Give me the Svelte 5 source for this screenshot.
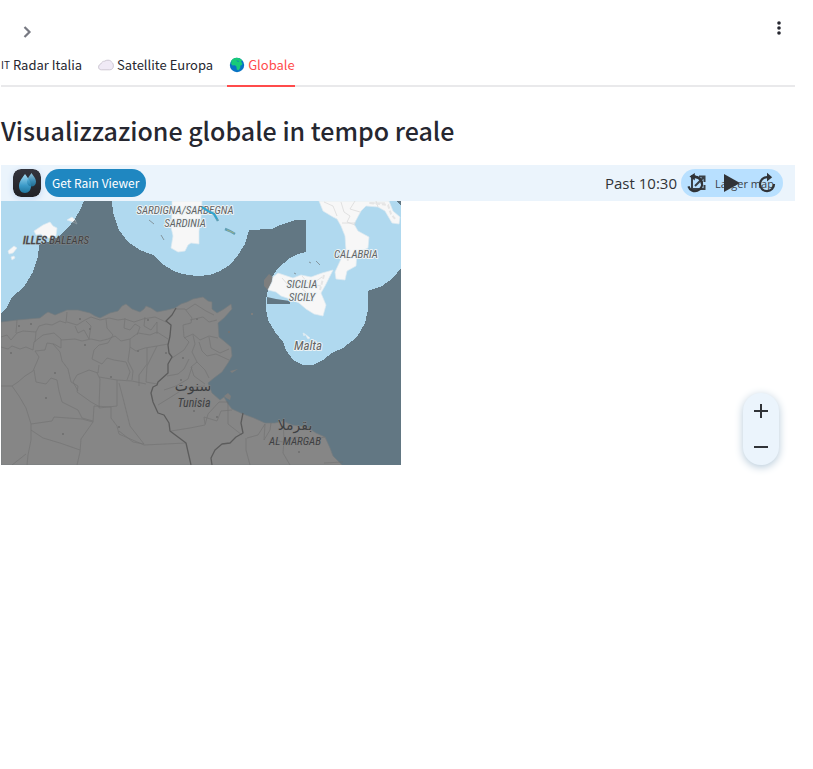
<script>
  const tabs = [
    { id: 'italia', label: 'Radar Italia' },
    { id: 'europa', label: 'Satellite Europa' },
    { id: 'globale', label: 'Globale' }
  ];
  let active = $state('globale');

  const provinces = [
    'M1 337L7 335L11 340L17 333L23 331L36 332L39 326L46 324L52 325L60 321L66 323L67 312',
    'M1 347L8 349L12 346L20 349L26 347L33 350L34 342L43 335L54 333L61 339L61 348L54 344L47 343L45 350L35 351L39 357L33 371L25 376L18 382L12 386L1 386',
    'M17 320L16 333M36 332L35 342M67 322L77 325L85 320L91 317L100 320L109 318L118 320L125 319L134 322L143 319L155 317L166 322',
    'M61 340L75 339L82 341L91 339L100 341L108 339L115 336L121 341L130 339L138 333L150 335L157 332L168 339',
    'M75 326L78 333L84 330L89 339L91 326L86 321M106 319L107 328L113 335L108 343L99 345L94 350L92 359L102 364L107 358L114 360L126 362L130 372L127 380',
    'M130 339L130 347L136 351L145 348L157 346L168 344M130 347L128 361L133 371L132 380M147 348L147 364L139 375L139 386M157 346L151 358L147 366L146 382L157 384',
    'M53 344L60 352L62 361L68 369L71 382L78 386L77 392L91 402L100 407',
    'M34 370L36 382L46 384L51 378L57 380L59 391L62 402L78 410L82 418L93 421',
    'M12 386L19 396L26 408L31 424L31 440L28 455L27 465M31 424L52 421L54 417L82 419L93 422L81 439L80 452L77 465',
    'M31 430L43 438L60 443L80 450M12 465L26 454',
    'M99 365L98 373L89 370L77 375L73 382L78 391M99 377L117 380L117 406L99 408L100 379L97 373M117 380L132 381L146 384',
    'M111 407L111 418L117 426L119 434L144 445L186 443M119 383L123 398L130 426L144 444L133 442L119 431',
    'M93 422L94 406L111 407M125 318L124 328L130 330L135 324L140 327L137 335M145 317L144 326L151 330L157 322L157 334',
    'M176 309L185 309L192 318L191 323L183 325L184 337L189 342L184 350L172 358M186 310L195 304L206 311L214 315',
    'M190 320L203 317L209 322L217 320M184 338L193 334L200 340L209 336L218 338M193 335L195 344L192 352L197 362L191 367L194 376L205 384',
    'M199 342L202 351L207 356L216 354L229 360M209 337L211 348L220 353L229 349M189 359L184 369L178 374L167 376M197 362L205 370L209 378',
    'M192 367L188 379L176 386L164 390M158 405L171 397L185 388L205 386M171 431L190 428L205 425L208 414L219 402L228 402',
    'M205 424L204 417L217 421L221 411L232 410M228 402L228 424L242 435M246 438L246 450L250 465M247 438L258 435L265 424L264 440L270 430L271 423',
    'M283 422L284 440L283 453L290 465M270 439L283 442L296 437L310 440L325 437M324 463L343 462'
  ];
  const towns = [[10,352],[54,372],[45,397],[89,328],[110,376],[137,350],[180,379],[193,410],[62,433],[18,325],[84,344],[165,352],[182,357],[216,416],[298,451],[30,323],[79,318],[118,426],[147,319],[196,318],[228,331]];
</script>

<div class="page">
  <header>
    <button class="icon expand" aria-label="Apri barra laterale">
      <svg width="20" height="20" viewBox="0 0 20 20"><path d="M7.5 5L12.5 10L7.5 15" fill="none" stroke="#777982" stroke-width="2.2" /></svg>
    </button>
    <button class="icon more" aria-label="Menu principale">
      <svg width="20" height="20" viewBox="0 0 20 20" fill="#262730"><circle cx="10" cy="5" r="1.8" /><circle cx="10" cy="10" r="1.8" /><circle cx="10" cy="15" r="1.8" /></svg>
    </button>
  </header>

  <main>
    <div class="tabs" role="tablist">
      {#each tabs as tab}
        <button role="tab" class="tab" class:active={active === tab.id} aria-selected={active === tab.id} onclick={() => (active = tab.id)}>
          {#if tab.id === 'italia'}
            <span class="flag">IT</span>
          {:else if tab.id === 'europa'}
            <svg class="emoji" width="16" height="16" viewBox="0 0 16 16"><path d="M3.5 12.8C1.5 12.8.6 11.6.6 10.2C.6 8.4 1.6 7.2 3 6.8C3.8 5 5 4.2 6.6 4.2C7.6 3.4 8.8 3.2 10 3.2C12 3.2 13.2 4 13.8 5.4C14.9 6.1 15.4 7.3 15.4 8.8C15.4 11.2 14 12.8 11.7 12.8Z" fill="#f0eaf6" stroke="#c9c3cf" stroke-width=".9" /></svg>
          {:else}
            <svg class="emoji" width="16" height="16" viewBox="0 0 16 16"><circle cx="8" cy="8" r="7.2" fill="#0873c4" /><path d="M2 4L4 1.8L7 .8L10.6 1.3L13.5 3.5L12 4.2L13.5 7L12.6 8.3L11.4 8.6L11.2 11L9.5 13.2L7.8 12.5L7.4 9.5L6 8.3L3.5 8.4L2 6.7L2.5 5Z" fill="#18cb78" /><path d="M7 3.6L10.5 4L9 4.7ZM12 10.2L12.8 9.6L12.4 11.7Z" fill="#0873c4" /></svg>
          {/if}
          <span>{tab.label}</span>
        </button>
      {/each}
    </div>

    <h2>Visualizzazione globale in tempo reale</h2>

    <section class="viewer" aria-label="Rain Viewer">
      <div class="bar">
        <svg class="logo" width="28" height="28" viewBox="0 0 28 28">
          <defs>
            <linearGradient id="tile" x1="0" y1="0" x2="0" y2="1"><stop offset="0" stop-color="#34353d" /><stop offset="1" stop-color="#202126" /></linearGradient>
            <linearGradient id="drop" x1="0" y1="0" x2="0" y2="1"><stop offset="0" stop-color="#a6dbf2" /><stop offset=".6" stop-color="#3c9bc9" /><stop offset="1" stop-color="#20769f" /></linearGradient>
          </defs>
          <rect width="28" height="28" rx="8" fill="url(#tile)" />
          <path d="M12 5C13.8 7.5 18 12.3 18 17C18 21 15.7 24 12 24C8.3 24 6 21.2 6 17C6 12.3 9.8 8 12 5Z" fill="url(#drop)" />
          <path d="M18.5 4C20 6.5 23 9.4 23 12.5C23 15.8 21.2 17.5 18.3 17.5C15.5 17.5 14 15.5 14 12.6C14 9.5 16.8 6.5 18.5 4Z" fill="url(#drop)" opacity=".85" />
        </svg>
        <a class="get" href="#rainviewer">Get Rain Viewer</a>
        <span class="time">Past 10:30</span>
        <div class="actions">
          <a class="larger" href="#map">
            <svg width="18" height="18" viewBox="0 0 18 18" fill="none" stroke="#3a4147" stroke-width="2"><path d="M7 2.5H3V15H15.5V11M10 2.5H15.5V8M15.5 2.5L6 12" /></svg>
            <span>Larger map</span>
          </a>
          <div class="playback">
            <button class="icon" aria-label="Indietro"><svg width="22" height="22" viewBox="0 0 22 22"><path d="M10 5.2A7 7 0 1 1 3 12" fill="none" stroke="#303337" stroke-width="2.2" transform="rotate(-20 10 12)" /><path d="M4.5 4.5L9.8 1V8.4Z" fill="#303337" /><path d="M9 4.7C14 4.7 17 8 17 12" fill="none" stroke="#303337" stroke-width="2.2" /></svg></button>
            <button class="icon" aria-label="Riproduci"><svg width="22" height="22" viewBox="0 0 22 22"><path d="M3 2L19 11L3 20Z" fill="#303337" /></svg></button>
            <button class="icon" aria-label="Avanti"><svg width="22" height="22" viewBox="0 0 22 22"><path d="M10 5.2A7 7 0 1 0 17 12" fill="none" stroke="#303337" stroke-width="2.2" /><path d="M10 .8V9.6L15.2 5.2Z" fill="#303337" /></svg></button>
          </div>
        </div>
      </div>

      <div class="map">
        <svg class="tile" width="400" height="264" viewBox="1 201 400 264" role="img" aria-label="Mappa radar">
          <rect x="1" y="201" width="400" height="264" fill="#627783" />
          <g fill="#b0d9ef" shape-rendering="crispEdges">
            <path d="M1 201H84L80 210L75 219L67 229L58 237L50 241L39 245L38 257L33 272L25 285L18 292L12 297L7 307L1 313Z" />
            <path d="M112 201L113 213L119 230L128 242L140 250L153 255L160 262L167 267L174 271L182 274L197 276L210 275L220 271L230 265L238 255L245 244L249 230L272 229L280 225L295 220H306V252L298 254L290 258L278 268L272 277L268 290L266 300V309L268 320L275 332L283 342L286 350L293 360L303 365H313L323 360L332 353L343 348L357 337L365 323L368 310V291L382 286L393 278L401 268V206L397 201Z" />
          </g>
          <path d="M267 297L276 299L290 301V304H267Z" fill="#627783" />
          <path d="M1 322L17 320L40 318L45 314L48 312L55 315L67 310L78 310L90 313L95 316L100 318L106 315L110 313L118 311L122 306L126 304L132 309L140 312L144 309L146 306L151 308L157 312L167 310L175 308L181 304L187 302L193 299L203 297L208 301L212 302V309L217 313L224 309L231 304L232 309L224 318L218 323L219 337L224 341L231 347L232 356L228 363L222 372L214 378L208 383L212 393L220 400L224 397L228 404L232 409L243 414L254 418L265 423L275 423L283 421L292 425L307 427L316 433L325 437L330 448L333 456L342 465H1Z" fill="#868686" stroke="#747b7e" stroke-width=".7" />
          <path d="M224 396L228 393L231 396L230 400L226 398ZM230 371L238 369L235 371L232 373ZM264 280L269 274L273 277L272 282L268 290L264 286ZM251 313H253V315H251Z" fill="#7d7e7e" />
          <g fill="#f7f7f7" stroke="#ddeaf0" stroke-width=".7">
            <path d="M34 231L43 225L50 222L53 226L57 228L56 236L50 238L44 238L41 234L36 235ZM67 220L72 217L76 221L73 222ZM8 251L14 246L17 248L13 253L9 254ZM11 257L14 256L15 258L12 260Z" />
            <path d="M172 201H202L201 217L199 231L199 244L191 243L188 245L185 251L178 252L171 248L173 236L171 227L172 213Z" />
            <path d="M273 277L278 273L284 275L293 278L301 275L311 277L322 273L333 270L325 286L321 293L326 305L323 316L314 314L306 309L299 303L290 299L281 296L276 292L268 290L272 282Z" />
            <path d="M319 201L323 211L333 217L337 219L341 226L345 236L346 251L341 259L335 272L336 279L345 280L347 271L356 266L357 253L368 248L369 237L358 231L354 224L361 211L366 206L378 207L385 211L392 223L399 224L400 217L393 211L389 201Z" />
            <path d="M305 334L310 338L308 339ZM303 333L305 334L304 336Z" />
          </g>
          <path d="M75 220L77 224L73 222ZM149 220L154 224M161 235L164 240" fill="#73787c" stroke="#84969f" stroke-width="1" />
          <g fill="none" stroke="#dadada" stroke-width=".8">
            <path d="M324 202L333 206L337 216M341 202L344 212L350 216L347 222L355 225M342 223H356M355 201L350 209L360 212M369 203H385M376 201L378 207M282 278L289 286L297 285L306 292M302 276L309 284L321 286M306 292L313 302M312 284L322 277" />
          </g>
          <g fill="none" stroke="#e5e5e5" stroke-width="2"><path d="M370 203L388 205L391 214L396 220M324 275L320 290M347 251L348 262" stroke-dasharray="4 2" /></g>
          <path d="M294 273L296 274M309 262L311 263M316 261L320 265" stroke="#84969f" />
          <g fill="none" stroke="#6d6d6d" stroke-width=".7" opacity=".7" stroke-linejoin="round">
            {#each provinces as d}<path {d} />{/each}
          </g>
          <g fill="#737373">
            {#each towns as [x, y]}<rect {x} {y} width="2" height="2" />{/each}
          </g>
          <g fill="none" stroke="#5c5c5c" stroke-width="1.3" stroke-linejoin="round">
            <path d="M176 308L172 315L166 321L171 325L170 336L168 345L169 353L172 357L168 364L168 373L158 382L157 385L153 387L151 393L153 402L158 413L164 415L169 423L170 431L186 443L191 465" />
            <path d="M243 413L241 423L243 433L236 437L230 443L222 444L215 450L211 458L212 465" />
          </g>
          <g class="names" text-anchor="middle">
            <text x="185" y="214">SARDIGNA/SARDEGNA</text>
            <text x="185" y="227">SARDINIA</text>
            <text class="dark" x="56" y="244">ILLES BALEARS</text>
            <text x="356" y="258">CALABRIA</text>
            <text x="302" y="288">SICILIA</text>
            <text x="302" y="301">SICILY</text>
            <text class="big" x="308" y="350">Malta</text>
            <text class="dark arabic" x="193" y="391">سنوت</text>
            <text class="dark tall" x="194" y="407">Tunisia</text>
            <text class="dark arabic" x="295" y="430">بقرملا</text>
            <text class="dark" x="295" y="445">AL MARGAB</text>
          </g>
          <path d="M202 207L208 211L214 214L218 221M225 229L230 231L235 234" fill="none" stroke="#5f9eb3" stroke-width="2.5" />
          <path d="M202 207L208 211L214 214L217 219" fill="none" stroke="#20a9dc" stroke-width="1.2" />
          <path d="M227 230L234 233" stroke="#9bae87" />
        </svg>
        <div class="zoom">
          <button aria-label="Ingrandisci"><svg width="16" height="16" viewBox="0 0 16 16"><path d="M8 1V15M1 8H15" stroke="#303337" stroke-width="2" /></svg></button>
          <button aria-label="Riduci"><svg width="16" height="16" viewBox="0 0 16 16"><path d="M1 8H15" stroke="#303337" stroke-width="2" /></svg></button>
        </div>
      </div>
    </section>
  </main>
</div>

<style>
  :global(body) { background: #fff; }
  .page {
    min-height: 100vh;
    color: #262730;
    font-family: "Noto Sans CJK SC", "Noto Sans", sans-serif;
  }
  button {
    border: 0;
    padding: 0;
    background: none;
    color: inherit;
    font: inherit;
    cursor: pointer;
  }
  a { text-decoration: none; }
  svg { display: block; flex: none; }
  header {
    display: flex;
    justify-content: space-between;
    align-items: flex-start;
    height: 26px;
    padding: 18px 24px 0 17px;
  }
  .expand { padding-top: 4px; }
  main { padding: 0 18px 0 1px; }
  .tabs {
    display: flex;
    gap: 14px;
    height: 41px;
    border-bottom: 2px solid #e9e9eb;
  }
  .tab {
    display: flex;
    align-items: center;
    gap: 3px;
    height: 43px;
    box-sizing: border-box;
    border-bottom: 2px solid transparent;
    font-size: 13px;
    line-height: 20px;
    white-space: nowrap;
  }
  .tab.active {
    border-color: #ff4b4b;
    color: #ff4b4b;
  }
  .tab .emoji { margin-left: 2px; }
  .flag { font-size: 10px; }
  h2 {
    margin: 0;
    padding: 24px 0 16px;
    font-size: 25px;
    font-weight: 500;
    line-height: 38px;
  }
  .bar {
    display: flex;
    align-items: center;
    height: 36px;
    padding: 0 12px;
    background: #ebf4fc;
    font-family: "Open Sans", "Noto Sans", sans-serif;
  }
  .logo {
    border-radius: 8px;
    box-shadow: 0 2px 6px #c4daf5;
  }
  .get {
    margin-left: 4px;
    padding: 0 7px;
    border-radius: 14px;
    background: #1f87c1;
    color: #fff;
    font-family: "Noto Sans CJK SC", "Noto Sans", sans-serif;
    font-size: 12px;
    line-height: 28px;
  }
  .time {
    margin-left: auto;
    margin-right: 4px;
    color: #303337;
    font-size: 15px;
  }
  .actions { position: relative; }
  .larger {
    display: flex;
    align-items: center;
    gap: 8px;
    box-sizing: border-box;
    width: 102px;
    height: 28px;
    padding: 0 8px;
    border-radius: 14px;
    background: #b8e0ff;
    color: #3a4147;
    font-size: 11px;
    white-space: nowrap;
  }
  .playback {
    position: absolute;
    inset: 0 4px;
    display: flex;
    justify-content: space-between;
    align-items: center;
  }
  .map { position: relative; }
  .names {
    fill: #636566;
    stroke: #edf3f5;
    stroke-width: 2px;
    stroke-linejoin: round;
    paint-order: stroke;
    font-family: "Roboto Condensed", "Roboto", sans-serif;
    font-size: 11px;
    font-style: italic;
  }
  .names .dark {
    fill: #3e4042;
    stroke: #858585;
    stroke-width: 1px;
  }
  .names .big { font-size: 13px; }
  .names .tall { font-size: 12px; }
  .names .arabic {
    font-family: "DejaVu Sans", sans-serif;
    font-size: 14px;
    font-style: normal;
  }
  .zoom {
    position: absolute;
    right: 16px;
    bottom: 0;
    display: flex;
    flex-direction: column;
    border-radius: 18px;
    background: #ebf4fc;
    box-shadow: 0 2px 8px #b4c8d8;
  }
  .zoom button {
    display: grid;
    place-items: center;
    width: 36px;
    height: 36px;
  }
</style>
